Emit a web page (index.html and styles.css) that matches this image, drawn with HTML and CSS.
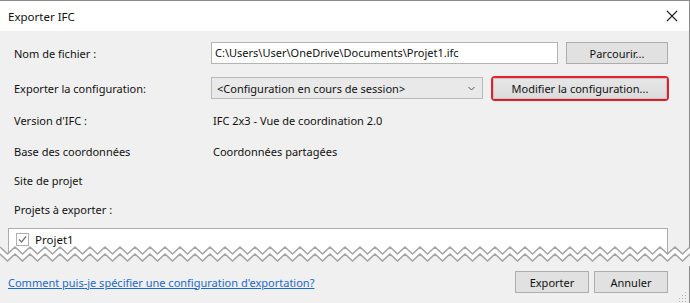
FILE: index.html
```html
<!DOCTYPE html>
<html>

	<head>
		<meta charset="UTF-8">
		<title>Exporter IFC</title>
		<link rel="stylesheet" href="styles.css">
	</head>

	<body>
		<div class="window">
			<div class="titlebar">
				<span>Exporter IFC</span>
				<svg class="close" width="12" height="12" viewBox="0 0 12 12">
					<path d="M1 1 L11 11 M11 1 L1 11" stroke="#222" stroke-width="1.1" fill="none" />
				</svg>
			</div>

			<div class="content">
				<div class="row row-file">
					<div class="label">Nom de fichier :</div>
					<div class="input">C:\Users\User\OneDrive\Documents\Projet1.ifc</div>
					<div class="btn btn-browse">Parcourir...</div>
				</div>
				<div class="row row-config">
					<div class="label">Exporter la configuration:</div>
					<div class="select">
						<span>&lt;Configuration en cours de session&gt;</span>
						<svg width="7" height="5" viewBox="0 0 7 5">
							<path d="M0.5 1 L3.5 4 L6.5 1" stroke="#555" stroke-width="1" fill="none" />
						</svg>
					</div>
					<div class="highlight">
						<div class="btn btn-modify">Modifier la configuration...</div>
					</div>
				</div>
				<div class="row row-info">
					<div class="label">Version d'IFC :</div>
					<div class="value">IFC 2x3 - Vue de coordination 2.0</div>
				</div>
				<div class="row row-short">
					<div class="label">Base des coordonnées</div>
					<div class="value">Coordonnées partagées</div>
				</div>
				<div class="row row-short">
					<div class="label">Site de projet</div>
				</div>
				<div class="row row-last">
					<div class="label">Projets à exporter :</div>
				</div>

				<div class="list">
					<div class="list-item">
						<span class="check">
							<svg width="11" height="11" viewBox="0 0 11 11">
								<path d="M2 5.5 L4.5 8 L9 2.5" stroke="#777" stroke-width="1.3" fill="none" />
							</svg>
						</span>
						<span>Projet1</span>
					</div>
				</div>

				<div class="footer">
					<a class="help" href="#">Comment puis-je spécifier une configuration d'exportation?</a>
					<div class="actions">
						<div class="btn btn-action">Exporter</div>
						<div class="btn btn-action">Annuler</div>
					</div>
				</div>
			</div>

			<!-- coupure de la capture -->
			<svg class="tear" width="690" height="22" viewBox="0 0 690 22"></svg>

			<div class="grip">
				<svg width="10" height="10" viewBox="0 0 10 10" fill="#b5b5b5">
					<rect x="8" y="0" width="1" height="1" />
					<rect x="5" y="3" width="1" height="1" />
					<rect x="8" y="3" width="1" height="1" />
					<rect x="2" y="6" width="1" height="1" />
					<rect x="5" y="6" width="1" height="1" />
					<rect x="8" y="6" width="1" height="1" />
					<rect x="2" y="9" width="1" height="1" />
					<rect x="5" y="9" width="1" height="1" />
					<rect x="8" y="9" width="1" height="1" />
				</svg>
			</div>
		</div>

		<script>
			/*ligne en zigzag*/
			let step = 7.5;
			let top_ = "", bottom_ = "";
			for(let i = 0; i * step <= 700; i++) {
				let x = i * step;
				let up = i % 2 == 0;
				top_ += (i == 0 ? "M" : " L") + x + " " + (up ? 3 : 10);
				bottom_ += (i == 0 ? "M" : " L") + x + " " + (up ? 10 : 17);
			}
			let svg = document.getElementsByClassName("tear")[0];
			svg.innerHTML =
				'<path d="' + top_ + ' L700 40 L0 40 Z" fill="#fff" />' +
				'<path d="' + bottom_ + ' L700 22 L0 22 Z" fill="#f0f0f0" />' +
				'<path d="' + top_ + '" stroke="#a3a3a3" stroke-width="1.6" fill="none" />' +
				'<path d="' + bottom_ + '" stroke="#a3a3a3" stroke-width="1.6" fill="none" />';
		</script>
	</body>

</html>
```

FILE: styles.css
```css
* {
	margin: 0;
	box-sizing: border-box;
}

body {
	width: 690px;
	height: 303px;
	overflow: hidden;
	font-family: "Noto Sans", "Liberation Sans", sans-serif;
	font-size: 11px;
	color: #111;
	background: #f0f0f0;
}

.window {
	position: relative;
	width: 690px;
	height: 303px;
	border-top: 1px solid #8a8a8a;
	border-right: 1px solid #8a8a8a;
	display: flex;
	flex-direction: column;
}

.titlebar {
	height: 30px;
	background: #fff;
	display: flex;
	align-items: center;
	justify-content: space-between;
	padding: 0 11px 0 8px;
	font-size: 11.5px;
}

.content {
	flex: 1;
	background: #f0f0f0;
	padding: 11px 21px 0 8px;
	display: flex;
	flex-direction: column;
}

.row {
	display: flex;
	align-items: center;
	height: 22px;
}

.label {
	width: 203px;
	padding-left: 6px;
	flex-shrink: 0;
}

.value {
	padding-left: 2px;
}

.row-file {
	margin-bottom: 13px;
}

.row-config {
	margin-bottom: 10px;
}

.row-info {
	margin-bottom: 9px;
}

.row-short {
	margin-bottom: 7px;
}

.row-last {
	margin-bottom: 8px;
}

.input {
	width: 347px;
	height: 22px;
	background: #fff;
	border: 1px solid #b4b4b4;
	padding: 0 3px;
	line-height: 20px;
}

.btn {
	height: 22px;
	background: #e1e1e1;
	border: 1px solid #adadad;
	display: flex;
	align-items: center;
	justify-content: center;
}

.btn-browse {
	margin-left: auto;
	width: 102px;
}

.select {
	width: 272px;
	height: 22px;
	background: #e9e9e9;
	border: 1px solid #b9b9b9;
	display: flex;
	align-items: center;
	justify-content: space-between;
	padding: 0 7px 0 5px;
}

.highlight {
	margin-left: auto;
	border: 2px solid #e8232a;
	border-radius: 4px;
	width: 178px;
	height: 25px;
	margin-right: -1px;
}

.btn-modify {
	height: 21px;
	border-color: #c4c4c4;
	background: linear-gradient(#e6e6e6, #dcdcdc);
	box-shadow: 0 1px 2px rgba(0, 0, 0, .15);
}

.list {
	height: 30px;
	background: #fff;
	border: 1px solid #adadad;
	border-bottom: none;
}

.list-item {
	display: flex;
	align-items: center;
	gap: 6px;
	padding: 3px 0 0 7px;
	font-size: 11.5px;
}

.check {
	width: 13px;
	height: 13px;
	border: 1px solid #b0b0b0;
	display: flex;
	align-items: center;
	justify-content: center;
}

.footer {
	display: flex;
	align-items: center;
	justify-content: space-between;
	margin-top: 13px;
}

.help {
	color: #1c6ac8;
	text-decoration: underline;
}

.actions {
	display: flex;
	gap: 5px;
}

.btn-action {
	width: 74px;
}

.tear {
	position: absolute;
	left: 0;
	top: 243px;
}

.grip {
	position: absolute;
	right: 2px;
	bottom: 1px;
	display: flex;
}
```
